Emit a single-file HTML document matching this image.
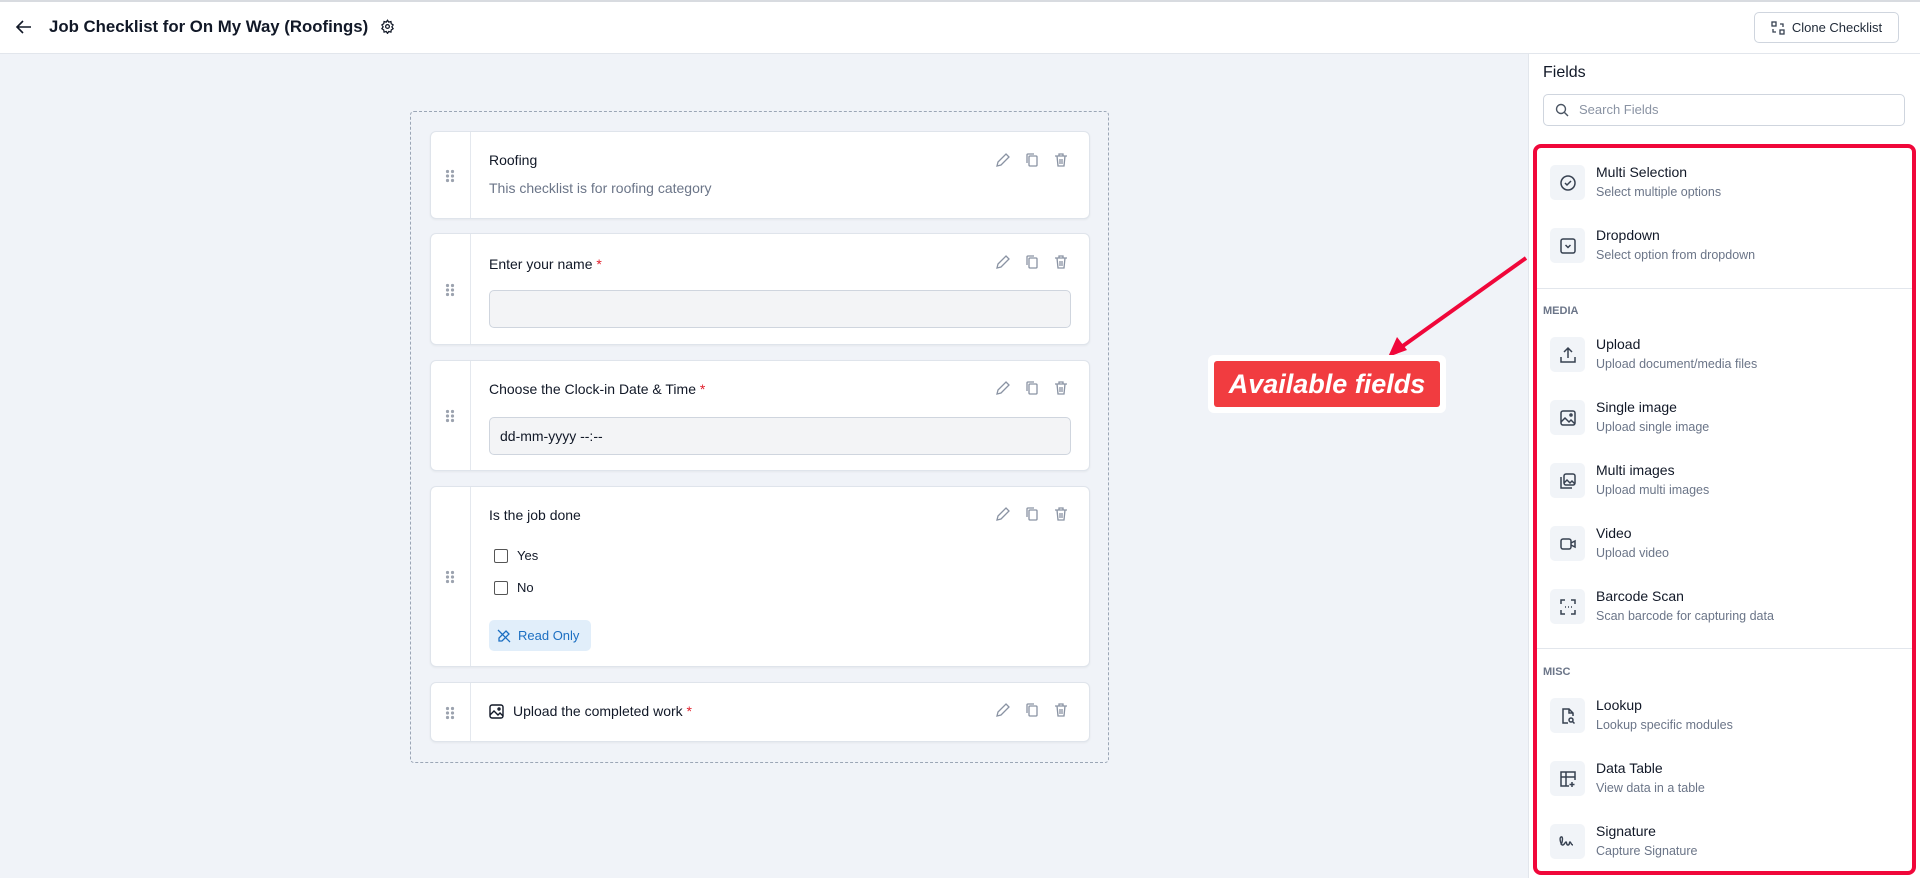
<!DOCTYPE html>
<html><head><meta charset="utf-8"><style>
*{box-sizing:border-box;margin:0;padding:0}
body{width:1920px;height:878px;overflow:hidden;background:#f0f3f8;font-family:"Liberation Sans",sans-serif;color:#1f2937;position:relative}
.abs{position:absolute}
.hdr{left:0;top:0;width:1920px;height:54px;background:#fff;border-top:2px solid #d8dbe0;border-bottom:1px solid #e2e6ec}
.title{left:49px;top:17px;font-size:16.8px;font-weight:bold;color:#111827}
.btn{left:1754px;top:12px;width:145px;height:31px;border:1px solid #cfd5de;border-radius:5px;font-size:13px;color:#1f2937;display:flex;align-items:center;justify-content:center;gap:7px;background:#fff}
.panel{left:1528px;top:54px;width:392px;height:824px;background:#fff;border-left:1px solid #e2e6ec}
.canvas{left:410px;top:111px;width:699px;height:652px;border:1px dashed #9ba6b6;border-radius:4px}
.card{left:430px;width:660px;background:#fff;border:1px solid #dfe4eb;border-radius:6px;box-shadow:0 1px 2px rgba(0,0,0,.05)}
.card .hd{position:absolute;left:0;top:0;bottom:0;width:40px;border-right:1px solid #e4e8ee}
.dots{position:absolute;left:14px;width:10px;height:14px}
.card .t{position:absolute;left:58px;font-size:14px;color:#111827}
.req{color:#e11d2a}
.acts{position:absolute;right:20px;display:flex;gap:13px}
.inp{position:absolute;left:58px;right:18px;height:38px;background:#f3f4f6;border:1px solid #cfd5de;border-radius:5px}
.fi{position:absolute;left:1550px;width:35px;height:35px;background:#f1f4f8;border-radius:5px;display:flex;align-items:center;justify-content:center}
.fn{position:absolute;left:1596px;font-size:14px;color:#111827}
.fs{position:absolute;left:1596px;font-size:12.5px;color:#6b7588}
.sec{position:absolute;left:1543px;font-size:11px;font-weight:bold;color:#6b7588}
.div{position:absolute;left:1536px;width:376px;height:1px;background:#e2e6ec}
</style></head><body>
<div class="abs hdr"></div>
<svg class="abs" style="left:14px;top:17px" width="20" height="20" viewBox="0 0 20 20" fill="none" stroke="#111827" stroke-width="1.6"><path d="M17 10H3M9 4l-6 6 6 6"/></svg>
<div class="abs title">Job Checklist for On My Way (Roofings)</div>
<svg class="abs" style="left:380px;top:19px" width="15" height="15" viewBox="0 0 24 24" fill="none" stroke="#111827" stroke-width="2"><circle cx="12" cy="12" r="3"/><path d="M12 2l2 3 3.5-1 .5 3.5 3 2-2 3 2 3-3 2-.5 3.5-3.5-1-2 3-2-3-3.5 1L6 17.5l-3-2 2-3-2-3 3-2L6.5 4 10 5z"/></svg>
<div class="abs btn"><svg width="14" height="14" viewBox="0 0 14 14" fill="none" stroke="#374151" stroke-width="1.3"><rect x="1" y="1" width="4" height="4"/><rect x="9" y="9" width="4" height="4"/><path d="M9 3h3v3M5 11H2V8"/></svg>Clone Checklist</div>

<div class="abs canvas"></div>

<div class="abs card" style="top:131px;height:88px"><div class="hd"><svg class="dots" style="top:37px" viewBox="0 0 10 14" fill="#9ca3af"><circle cx="2.5" cy="2.5" r="1.6"/><circle cx="7.5" cy="2.5" r="1.6"/><circle cx="2.5" cy="7" r="1.6"/><circle cx="7.5" cy="7" r="1.6"/><circle cx="2.5" cy="11.5" r="1.6"/><circle cx="7.5" cy="11.5" r="1.6"/></svg></div>
<div class="t" style="top:20px">Roofing</div><div class="t" style="top:48px;color:#6b7588">This checklist is for roofing category</div>
<div class="acts" style="top:20px">ACTS</div></div>
<div class="abs card" style="top:233px;height:112px"><div class="hd"><svg class="dots" style="top:49px" viewBox="0 0 10 14" fill="#9ca3af"><circle cx="2.5" cy="2.5" r="1.6"/><circle cx="7.5" cy="2.5" r="1.6"/><circle cx="2.5" cy="7" r="1.6"/><circle cx="7.5" cy="7" r="1.6"/><circle cx="2.5" cy="11.5" r="1.6"/><circle cx="7.5" cy="11.5" r="1.6"/></svg></div>
<div class="t" style="top:22px">Enter your name <span class="req">*</span></div>
<div class="acts" style="top:20px">ACTS</div><div class="inp" style="top:56px"></div></div>
<div class="abs card" style="top:360px;height:111px"><div class="hd"><svg class="dots" style="top:48px" viewBox="0 0 10 14" fill="#9ca3af"><circle cx="2.5" cy="2.5" r="1.6"/><circle cx="7.5" cy="2.5" r="1.6"/><circle cx="2.5" cy="7" r="1.6"/><circle cx="7.5" cy="7" r="1.6"/><circle cx="2.5" cy="11.5" r="1.6"/><circle cx="7.5" cy="11.5" r="1.6"/></svg></div>
<div class="t" style="top:20px">Choose the Clock-in Date &amp; Time <span class="req">*</span></div>
<div class="acts" style="top:19px">ACTS</div><div class="inp" style="top:56px;padding:10px 10px;font-size:14px;color:#111827">dd-mm-yyyy --:--</div></div>
<div class="abs card" style="top:486px;height:181px"><div class="hd"><svg class="dots" style="top:83px" viewBox="0 0 10 14" fill="#9ca3af"><circle cx="2.5" cy="2.5" r="1.6"/><circle cx="7.5" cy="2.5" r="1.6"/><circle cx="2.5" cy="7" r="1.6"/><circle cx="7.5" cy="7" r="1.6"/><circle cx="2.5" cy="11.5" r="1.6"/><circle cx="7.5" cy="11.5" r="1.6"/></svg></div>
<div class="t" style="top:20px">Is the job done</div>
<div class="acts" style="top:19px">ACTS</div>
<div style="position:absolute;left:63px;top:62px;width:14px;height:14px;border:1.3px solid #555;border-radius:2px"></div><div class="t" style="left:86px;top:61px;font-size:13px">Yes</div>
<div style="position:absolute;left:63px;top:94px;width:14px;height:14px;border:1.3px solid #555;border-radius:2px"></div><div class="t" style="left:86px;top:93px;font-size:13px">No</div>
<div style="position:absolute;left:58px;top:133px;width:102px;height:31px;background:#e1eefa;border-radius:5px;color:#1c6fc2;font-size:13px;display:flex;align-items:center;padding-left:8px;gap:7px"><svg width="14" height="14" viewBox="0 0 14 14" fill="none" stroke="#1c6fc2" stroke-width="1.3"><path d="M1 1l12 12M9 2l3 3-7 7H2V9z"/></svg>Read Only</div></div>
<div class="abs card" style="top:682px;height:60px"><div class="hd"><svg class="dots" style="top:23px" viewBox="0 0 10 14" fill="#9ca3af"><circle cx="2.5" cy="2.5" r="1.6"/><circle cx="7.5" cy="2.5" r="1.6"/><circle cx="2.5" cy="7" r="1.6"/><circle cx="7.5" cy="7" r="1.6"/><circle cx="2.5" cy="11.5" r="1.6"/><circle cx="7.5" cy="11.5" r="1.6"/></svg></div>
<svg style="position:absolute;left:58px;top:21px" width="15" height="15" viewBox="0 0 15 15" fill="none" stroke="#111827" stroke-width="1.4"><rect x="1" y="1" width="13" height="13" rx="2"/><path d="M1 11l4-4 4 4 2-2 3 3"/><circle cx="10" cy="5" r="1"/></svg>
<div class="t" style="left:82px;top:20px">Upload the completed work <span class="req">*</span></div>
<div class="acts" style="top:19px">ACTS</div></div>

<div class="abs panel"></div>
<div class="abs" style="left:1543px;top:64px;font-size:16px;color:#111827">Fields</div>
<div class="abs" style="left:1543px;top:94px;width:362px;height:32px;border:1px solid #cfd5de;border-radius:5px"></div>
<svg class="abs" style="left:1555px;top:103px" width="14" height="14" viewBox="0 0 14 14" fill="none" stroke="#4b5563" stroke-width="1.4"><circle cx="6" cy="6" r="4.5"/><path d="M9.5 9.5L13 13"/></svg>
<div class="abs" style="left:1579px;top:102px;font-size:13px;color:#8a93a3">Search Fields</div>

<div class="fi" style="top:165px"><svg width="18" height="18" viewBox="0 0 18 18" fill="none" stroke="#374151" stroke-width="1.5"><circle cx="9" cy="9" r="7"/><path d="M6 9l2 2 4-4"/></svg></div>
<div class="fn" style="top:164px">Multi Selection</div><div class="fs" style="top:185px">Select multiple options</div>
<div class="fi" style="top:228px"><svg width="18" height="18" viewBox="0 0 18 18" fill="none" stroke="#374151" stroke-width="1.5"><rect x="2" y="2" width="14" height="14" rx="2"/><path d="M6.5 8l2.5 2.5L11.5 8"/></svg></div>
<div class="fn" style="top:227px">Dropdown</div><div class="fs" style="top:248px">Select option from dropdown</div>
<div class="div" style="top:288px"></div>
<div class="sec" style="top:305px">MEDIA</div>
<div class="fi" style="top:337px"><svg width="18" height="18" viewBox="0 0 18 18" fill="none" stroke="#374151" stroke-width="1.5"><path d="M2 11v5h14v-5M9 12V2M5 6l4-4 4 4"/></svg></div>
<div class="fn" style="top:336px">Upload</div><div class="fs" style="top:357px">Upload document/media files</div>
<div class="fi" style="top:400px"><svg width="18" height="18" viewBox="0 0 18 18" fill="none" stroke="#374151" stroke-width="1.5"><rect x="2" y="2" width="14" height="14" rx="2"/><path d="M2 13l4-4 4 4 2-2 4 4"/><circle cx="12" cy="6" r="1"/></svg></div>
<div class="fn" style="top:399px">Single image</div><div class="fs" style="top:420px">Upload single image</div>
<div class="fi" style="top:463px"><svg width="18" height="18" viewBox="0 0 18 18" fill="none" stroke="#374151" stroke-width="1.5"><rect x="5" y="2" width="11" height="11" rx="2"/><path d="M2 5v11h11M5 11l3-3 3 3 2-2 3 3"/></svg></div>
<div class="fn" style="top:462px">Multi images</div><div class="fs" style="top:483px">Upload multi images</div>
<div class="fi" style="top:526px"><svg width="18" height="18" viewBox="0 0 18 18" fill="none" stroke="#374151" stroke-width="1.5"><rect x="2" y="4" width="10" height="10" rx="2"/><path d="M12 8l4-2v6l-4-2"/></svg></div>
<div class="fn" style="top:525px">Video</div><div class="fs" style="top:546px">Upload video</div>
<div class="fi" style="top:589px"><svg width="18" height="18" viewBox="0 0 18 18" fill="none" stroke="#374151" stroke-width="1.5"><path d="M2 6V2h4M12 2h4v4M16 12v4h-4M6 16H2v-4M6 9h1M9 9h1M12 9h1"/></svg></div>
<div class="fn" style="top:588px">Barcode Scan</div><div class="fs" style="top:609px">Scan barcode for capturing data</div>
<div class="div" style="top:648px"></div>
<div class="sec" style="top:666px">MISC</div>
<div class="fi" style="top:698px"><svg width="18" height="18" viewBox="0 0 18 18" fill="none" stroke="#374151" stroke-width="1.5"><path d="M9 16H4V2h6l4 4v3M10 2v4h4"/><circle cx="12" cy="13" r="2"/><path d="M13.5 14.5L15.5 16.5"/></svg></div>
<div class="fn" style="top:697px">Lookup</div><div class="fs" style="top:718px">Lookup specific modules</div>
<div class="fi" style="top:761px"><svg width="18" height="18" viewBox="0 0 18 18" fill="none" stroke="#374151" stroke-width="1.5"><path d="M10 16H2V2h14v8M2 7h14M7 2v14M13 12v5M10.5 14.5h5"/></svg></div>
<div class="fn" style="top:760px">Data Table</div><div class="fs" style="top:781px">View data in a table</div>
<div class="fi" style="top:824px"><svg width="18" height="18" viewBox="0 0 18 18" fill="none" stroke="#374151" stroke-width="1.4"><path d="M2 12c2-4 2-9 0-8s0 9 2 8 2-3 3-3 0 3 2 3 1-3 2-3 1 3 3 3"/></svg></div>
<div class="fn" style="top:823px">Signature</div><div class="fs" style="top:844px">Capture Signature</div>

<div class="abs" style="left:1533px;top:144px;width:383px;height:731px;border:4px solid #f0073a;border-radius:8px"></div>

<svg class="abs" style="left:0;top:0" width="1920" height="878"><line x1="1526" y1="258" x2="1400" y2="348" stroke="#f0073a" stroke-width="4"/><path d="M1388 357l9-20 10 13z" fill="#f0073a"/></svg>
<div class="abs" style="left:1208px;top:355px;width:238px;height:58px;background:#fff;border-radius:6px"></div>
<div class="abs" style="left:1214px;top:361px;width:226px;height:46px;background:#f13c40;border-radius:3px;color:#fff;font-size:27px;font-weight:bold;font-style:italic;display:flex;align-items:center;justify-content:center">Available fields</div>

<script>
var a='<svg width="16" height="16" viewBox="0 0 16 16" fill="none" stroke="#8a93a3" stroke-width="1.3"><path d="M11 2l3 3-8 8-4 1 1-4z"/></svg><svg width="16" height="16" viewBox="0 0 16 16" fill="none" stroke="#8a93a3" stroke-width="1.3"><rect x="5" y="4" width="8" height="10" rx="1"/><path d="M3 11V3a1 1 0 011-1h6"/></svg><svg width="16" height="16" viewBox="0 0 16 16" fill="none" stroke="#8a93a3" stroke-width="1.3"><path d="M2 4h12M6 4V2h4v2M4 4l1 10h6l1-10M7 7v5M9 7v5"/></svg>';
document.querySelectorAll('.acts').forEach(function(e){e.innerHTML=a});
</script>
</body></html>
